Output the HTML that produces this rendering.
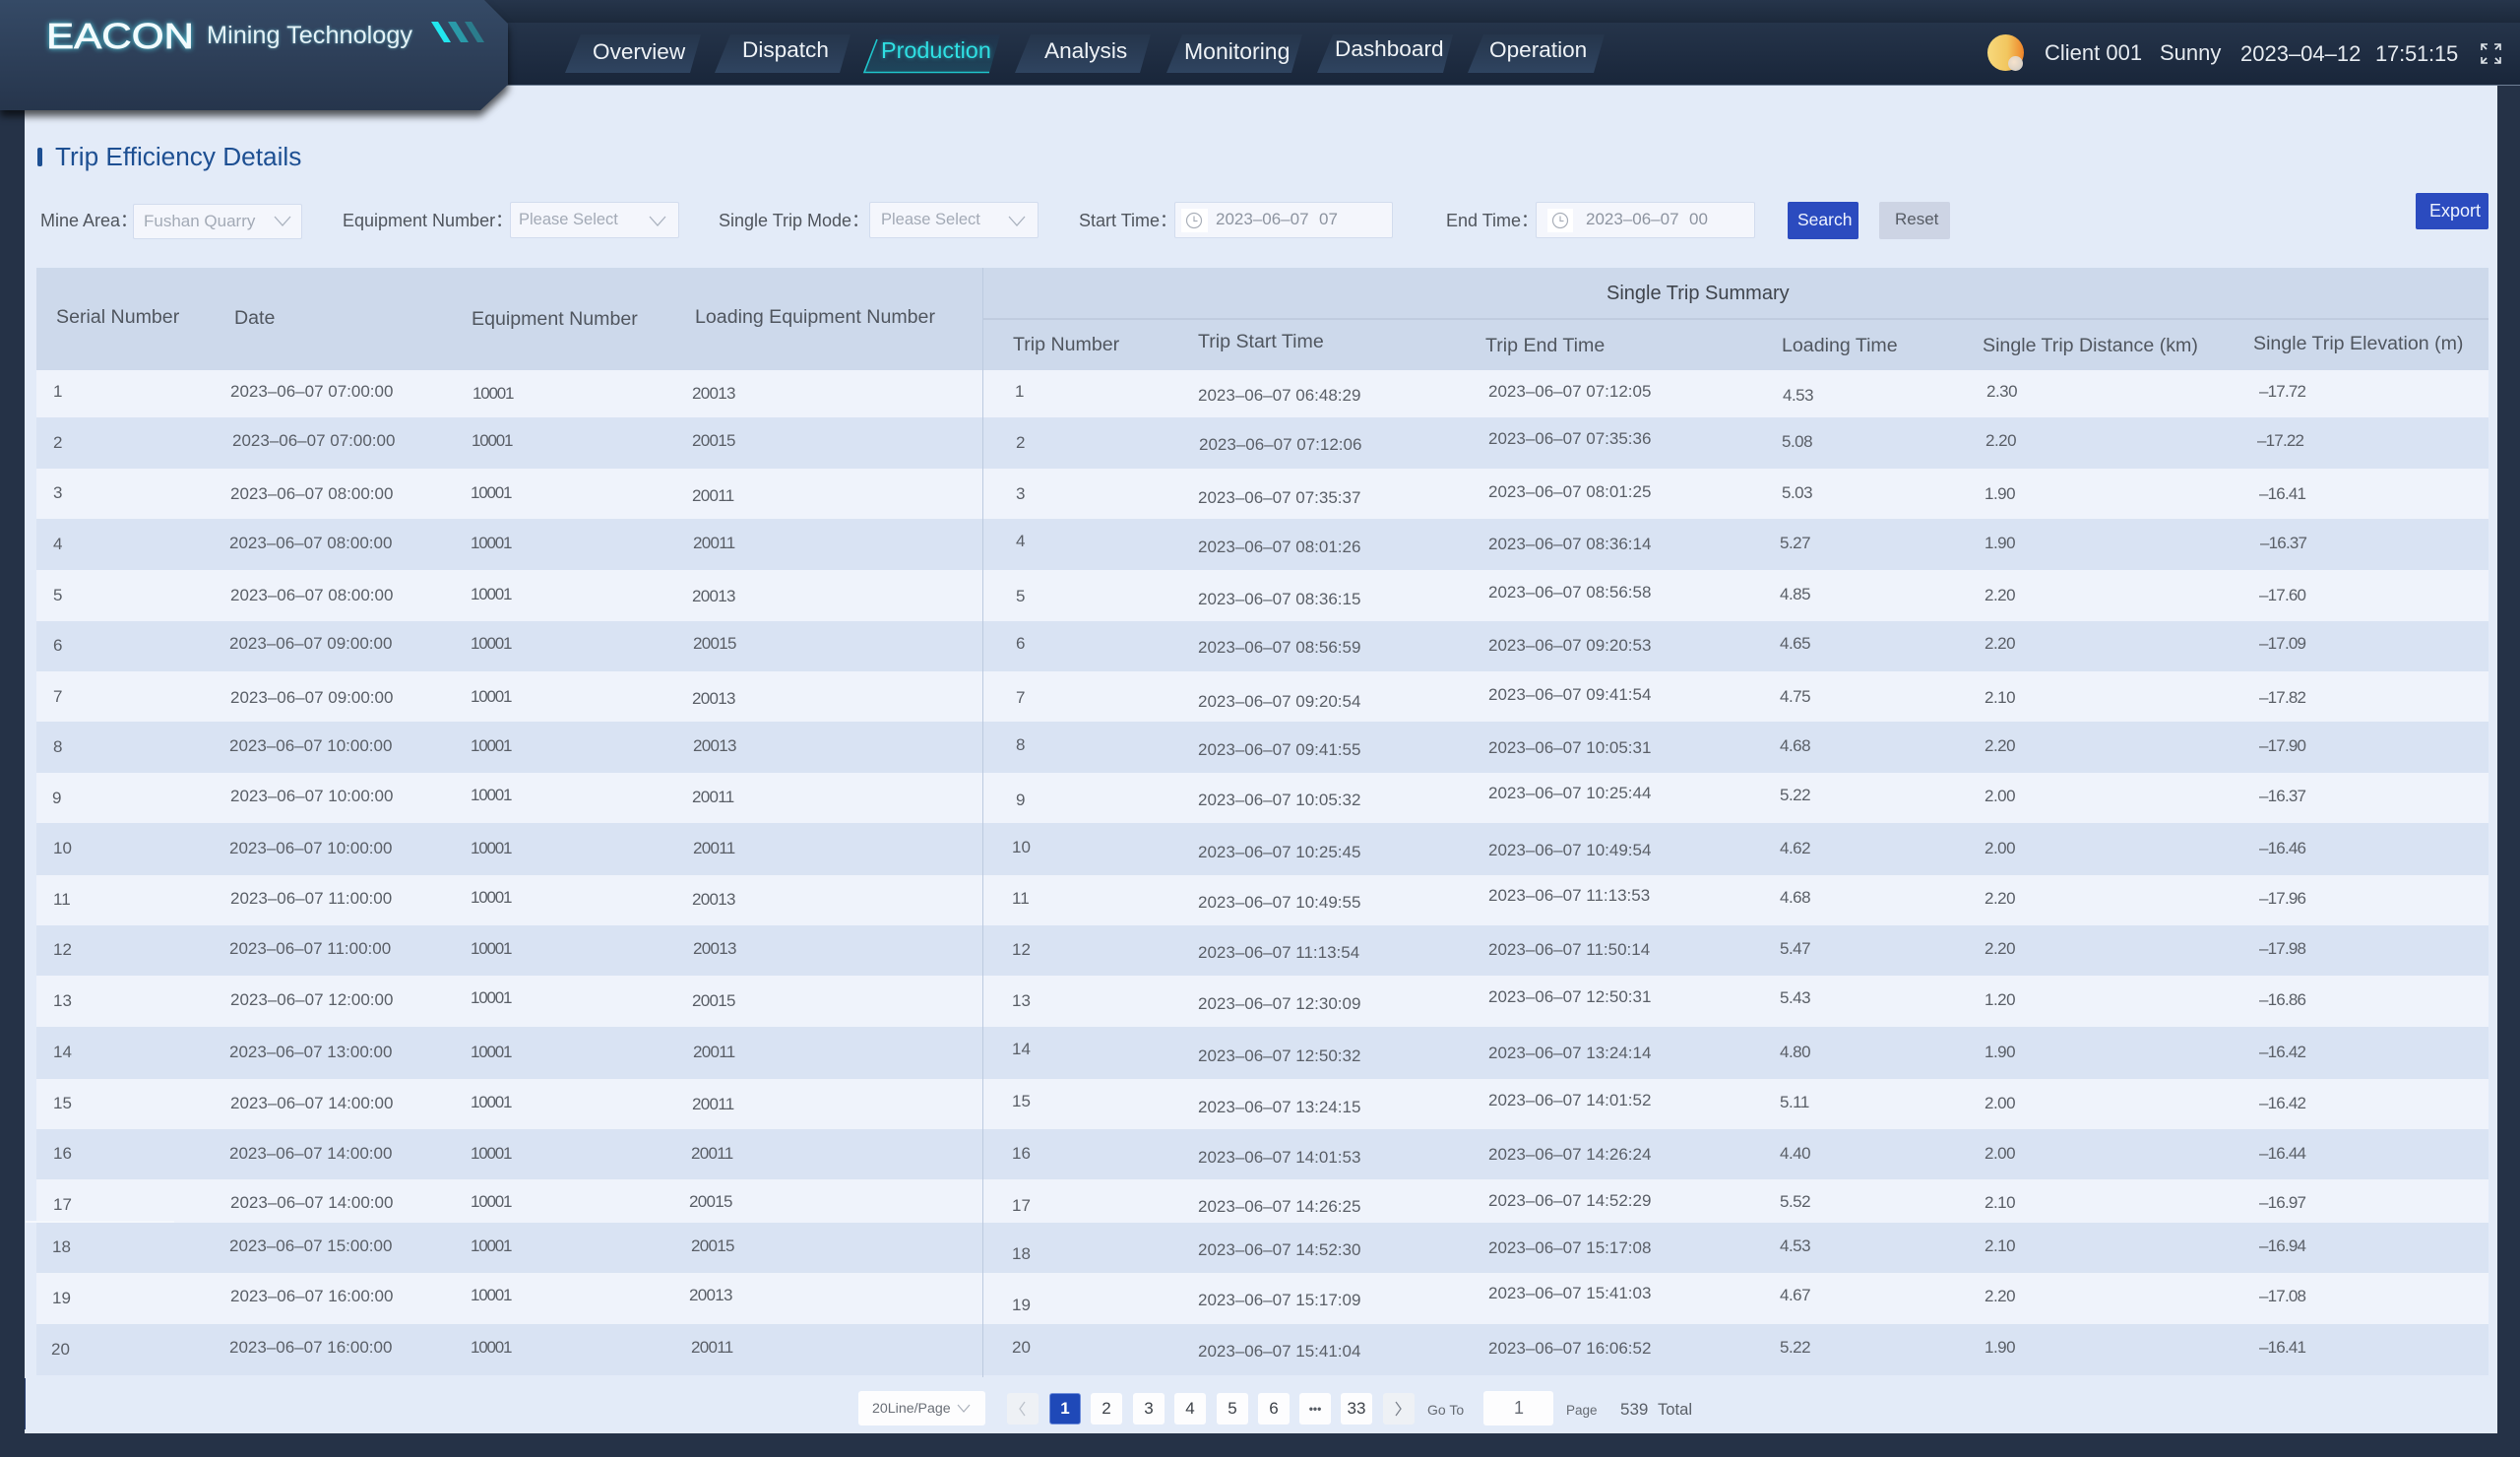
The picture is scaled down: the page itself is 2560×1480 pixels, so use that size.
<!DOCTYPE html>
<html lang="en"><head><meta charset="utf-8"><title>Trip Efficiency Details</title>
<style>
html,body{margin:0;padding:0}
body{width:2560px;height:1480px;overflow:hidden;position:relative;background:#253247;font-family:"Liberation Sans",sans-serif}
#c{position:absolute;left:25px;top:80px;width:2512px;height:1376px;background:#e3ebf8}
.b{position:absolute}
i{position:absolute;font-style:normal;white-space:nowrap;line-height:20px;font-size:17px;color:#5a5f67;filter:blur(.35px)}
.n{font-size:22.6px;color:#eef2f6}
.h{font-size:22px;color:#e6ebf0}
.l{font-size:18px;color:#50555d}
.p{font-size:16.5px;color:#a3aab6}
.s{position:absolute;background:#f4f6fc;border:1.5px solid #d2dcee;box-sizing:border-box;border-radius:2px}
.t{font-size:19.6px;color:#50565f}
.k{position:absolute;top:1415px;height:32px;width:32px;background:#fdfdfe;border-radius:3px}
.g{font-size:17px;color:#3d4249;width:32px;text-align:center}
.e{letter-spacing:-1.2px}.f{letter-spacing:-.7px}.v{letter-spacing:-.8px}.w{letter-spacing:-.5px}
</style></head><body>
<div id="c"></div>
<!-- header -->
<div class="b" style="left:0;top:0;width:2560px;height:23px;background:linear-gradient(#26354b,#1c293b)"></div>
<div class="b" style="left:0;top:23px;width:2560px;height:63px;background:linear-gradient(#25344a,#19263a);border-bottom:1px solid #6f7f95;box-sizing:content-box"></div>
<svg class="b" style="left:0;top:0" width="2560" height="90">
<defs><linearGradient id="tb" x1="0" y1="0" x2="0" y2="1"><stop offset="0" stop-color="#25354b"/><stop offset="1" stop-color="#2f4460"/></linearGradient>
<linearGradient id="tp" x1="0" y1="0" x2="0" y2="1"><stop offset="0" stop-color="#21324a"/><stop offset="1" stop-color="#1e465c"/></linearGradient></defs>
<polygon points="590,35 712,35 701,74 574,74" fill="url(#tb)"/>
<polygon points="742,35 864,35 853,74 726,74" fill="url(#tb)"/>
<polygon points="894,35 1016,35 1005,74 878,74" fill="url(#tp)"/>
<polygon points="1047,35 1169,35 1158,74 1031,74" fill="url(#tb)"/>
<polygon points="1201,35 1323,35 1312,74 1185,74" fill="url(#tb)"/>
<polygon points="1354,35 1476,35 1466,74 1338,74" fill="url(#tb)"/>
<polygon points="1507,35 1630,35 1619,74 1491,74" fill="url(#tb)"/>
<path d="M891 40L878 73.5H1005" fill="none" stroke="#1fc4cb" stroke-width="1.6"/>
</svg>
<i class="n" style="left:602px;top:43px">Overview</i>
<i class="n" style="left:754px;top:41px">Dispatch</i>
<i class="n" style="left:895px;top:41px;font-size:23.4px;color:#2fe0e3;text-shadow:0 0 4px rgba(47,224,227,.5)">Production</i>
<i class="n" style="left:1061px;top:42px">Analysis</i>
<i class="n" style="left:1203px;top:42px;font-size:23px">Monitoring</i>
<i class="n" style="left:1356px;top:40px">Dashboard</i>
<i class="n" style="left:1513px;top:41px">Operation</i>
<!-- logo -->
<div class="b" style="left:0;top:0;width:530px;height:125px;filter:drop-shadow(0 6px 4px rgba(0,0,0,.65))">
<div class="b" style="left:0;top:0;width:516px;height:112px;background:linear-gradient(#354a66,#26354c);clip-path:polygon(0 0,492px 0,516px 24px,516px 86px,488px 112px,0 112px)"></div>
</div>
<svg class="b" style="left:0;top:0" width="530" height="112">
<text x="47" y="49" font-family="Liberation Sans" font-size="36" fill="#f2fbfd" stroke="#f2fbfd" stroke-width=".7" textLength="150" lengthAdjust="spacingAndGlyphs" style="filter:drop-shadow(0 0 3px #55d8e8)">EACON</text>
<polygon points="438,22 445,22 458,43 451,43" fill="#22e6ee"/>
<polygon points="455,22 463,22 476,43 468,43" fill="#2a9aa8"/>
<polygon points="472,22 479,22 492,43 485,43" fill="#2b7c8c"/>
</svg>
<i style="left:210px;top:26px;font-size:25.3px;color:#e4f3f7;text-shadow:0 0 3px rgba(120,220,235,.6)">Mining Technology</i>
<!-- header right -->
<div class="b" style="left:2019px;top:35px;width:37px;height:37px;border-radius:50%;background:linear-gradient(90deg,#f7d97c,#f2c65f 55%,#ef8429)"></div>
<div class="b" style="left:2040px;top:57px;width:15px;height:15px;border-radius:50%;background:radial-gradient(circle at 40% 40%,#f6e2cc,#cbc8c2)"></div>
<i class="h" style="left:2077px;top:44px">Client 001</i>
<i class="h" style="left:2194px;top:44px">Sunny</i>
<i class="h" style="left:2276px;top:45px">2023–04–12</i>
<i class="h" style="left:2413px;top:45px;letter-spacing:-.2px">17:51:15</i>
<svg class="b" style="left:2520px;top:44px" width="21" height="21" fill="none" stroke="#dfe5ea" stroke-width="1.6"><path d="M1 7V1H7M1 1L6 6M14 1H20V7M20 1L15 6M1 14V20H7M1 20L6 15M14 20H20V14M20 20L15 15"/></svg>
<!-- sidebar edge -->
<div class="b" style="left:25px;top:1400px;width:1px;height:52px;background:#2a3f70"></div>
<!-- title -->
<div class="b" style="left:38px;top:150px;width:4.5px;height:19px;background:#1d4f92;border-radius:2px"></div>
<i style="left:56px;top:149px;font-size:26.2px;color:#1d4f92">Trip Efficiency Details</i>
<!-- filters -->
<i class="l" style="left:41px;top:214px">Mine Area：</i>
<div class="s" style="left:135px;top:207px;width:172px;height:36px"></div>
<i class="p" style="left:146px;top:215px;font-size:17px">Fushan Quarry</i>
<i class="l" style="left:348px;top:214px">Equipment Number：</i>
<div class="s" style="left:518px;top:205px;width:172px;height:37px"></div>
<i class="p" style="left:527px;top:213px">Please Select</i>
<i class="l" style="left:730px;top:214px">Single Trip Mode：</i>
<div class="s" style="left:883px;top:205px;width:172px;height:37px"></div>
<i class="p" style="left:895px;top:213px">Please Select</i>
<svg class="b" style="left:0;top:0" width="1100" height="240" fill="none" stroke="#a9b1be" stroke-width="1.3"><path d="M279 220L287 229L295 220M660 220L668 229L676 220M1025 220L1033 229L1041 220"/></svg>
<i class="l" style="left:1096px;top:214px">Start Time：</i>
<div class="s" style="left:1193px;top:205px;width:222px;height:37px"></div>
<div class="b" style="left:1200px;top:212px;width:27px;height:24px;background:#fff"></div>
<svg class="b" style="left:1204px;top:215px" width="18" height="18" fill="none" stroke="#a9afb9" stroke-width="1.2"><circle cx="9" cy="9" r="7.5"/><path d="M9 4.5V9.5H12.5"/></svg>
<i class="p" style="left:1235px;top:213px;font-size:17px;color:#8d94a0">2023–06–07</i>
<i class="p" style="left:1340px;top:213px;font-size:17px;color:#8d94a0">07</i>
<i class="l" style="left:1469px;top:214px">End Time：</i>
<div class="s" style="left:1560px;top:205px;width:223px;height:37px"></div>
<div class="b" style="left:1572px;top:212px;width:26px;height:24px;background:#fff"></div>
<svg class="b" style="left:1576px;top:215px" width="18" height="18" fill="none" stroke="#a9afb9" stroke-width="1.2"><circle cx="9" cy="9" r="7.5"/><path d="M9 4.5V9.5H12.5"/></svg>
<i class="p" style="left:1611px;top:213px;font-size:17px;color:#8d94a0">2023–06–07</i>
<i class="p" style="left:1716px;top:213px;font-size:17px;color:#8d94a0">00</i>
<div class="b" style="left:1816px;top:205px;width:72px;height:38px;background:#2b4bbf;border-radius:2px"></div>
<i style="left:1826px;top:213px;font-size:17.5px;color:#eef3ff">Search</i>
<div class="b" style="left:1909px;top:205px;width:72px;height:38px;background:#cdd4e4;border-radius:2px"></div>
<i style="left:1925px;top:213px;font-size:17px;color:#565b64">Reset</i>
<div class="b" style="left:2454px;top:196px;width:74px;height:37px;background:#2b4bbf;border-radius:2px"></div>
<i style="left:2468px;top:204px;font-size:18px;color:#eef3ff">Export</i>
<!-- table bg -->
<div class="b" style="left:37px;top:272px;width:2491px;height:104px;background:#cdd9eb"></div>
<div class="b" style="left:998px;top:323px;width:1530px;height:1.5px;background:#c0ccdf"></div>
<div class="b" style="left:37px;top:376px;width:2491px;height:48px;background:#eff3fb"></div>
<div class="b" style="left:37px;top:424px;width:2491px;height:52px;background:#d9e3f3"></div>
<div class="b" style="left:37px;top:476px;width:2491px;height:51px;background:#eff3fb"></div>
<div class="b" style="left:37px;top:527px;width:2491px;height:52px;background:#d9e3f3"></div>
<div class="b" style="left:37px;top:579px;width:2491px;height:52px;background:#eff3fb"></div>
<div class="b" style="left:37px;top:631px;width:2491px;height:51px;background:#d9e3f3"></div>
<div class="b" style="left:37px;top:682px;width:2491px;height:51px;background:#eff3fb"></div>
<div class="b" style="left:37px;top:733px;width:2491px;height:52px;background:#d9e3f3"></div>
<div class="b" style="left:37px;top:785px;width:2491px;height:51px;background:#eff3fb"></div>
<div class="b" style="left:37px;top:836px;width:2491px;height:53px;background:#d9e3f3"></div>
<div class="b" style="left:37px;top:889px;width:2491px;height:51px;background:#eff3fb"></div>
<div class="b" style="left:37px;top:940px;width:2491px;height:51px;background:#d9e3f3"></div>
<div class="b" style="left:37px;top:991px;width:2491px;height:52px;background:#eff3fb"></div>
<div class="b" style="left:37px;top:1043px;width:2491px;height:53px;background:#d9e3f3"></div>
<div class="b" style="left:37px;top:1096px;width:2491px;height:51px;background:#eff3fb"></div>
<div class="b" style="left:37px;top:1147px;width:2491px;height:51px;background:#d9e3f3"></div>
<div class="b" style="left:37px;top:1198px;width:2491px;height:44px;background:#eff3fb"></div>
<div class="b" style="left:26px;top:1240px;width:151px;height:1.5px;background:#f5f8fd"></div>
<div class="b" style="left:37px;top:1242px;width:2491px;height:51px;background:#d9e3f3"></div>
<div class="b" style="left:37px;top:1293px;width:2491px;height:52px;background:#eff3fb"></div>
<div class="b" style="left:37px;top:1345px;width:2491px;height:52px;background:#d9e3f3"></div>
<div class="b" style="left:997.5px;top:272px;width:1px;height:1127px;background:#bccadf"></div>
<!-- table head -->
<i class="t" style="left:57px;top:312px">Serial Number</i>
<i class="t" style="left:238px;top:313px">Date</i>
<i class="t" style="left:479px;top:314px">Equipment Number</i>
<i class="t" style="left:706px;top:312px">Loading Equipment Number</i>
<i class="t" style="left:1632px;top:288px;font-size:20px;color:#3f444c">Single Trip Summary</i>
<i class="t" style="left:1029px;top:340px">Trip Number</i>
<i class="t" style="left:1217px;top:337px">Trip Start Time</i>
<i class="t" style="left:1509px;top:341px">Trip End Time</i>
<i class="t" style="left:1810px;top:341px">Loading Time</i>
<i class="t" style="left:2014px;top:341px">Single Trip Distance (km)</i>
<i class="t" style="left:2289px;top:339px">Single Trip Elevation (m)</i>
<!-- row 1 -->
<i style="left:54px;top:388px">1</i><i style="left:234px;top:388px">2023–06–07 07:00:00</i><i class="e" style="left:480px;top:390px">10001</i><i class="f" style="left:703px;top:390px">20013</i><i style="left:1031px;top:388px">1</i><i style="left:1217px;top:392px">2023–06–07 06:48:29</i><i style="left:1512px;top:388px">2023–06–07 07:12:05</i><i class="w" style="left:1811px;top:392px">4.53</i><i class="w" style="left:2018px;top:388px">2.30</i><i class="v" style="left:2295px;top:388px">–17.72</i>
<!-- row 2 -->
<i style="left:54px;top:440px">2</i><i style="left:236px;top:438px">2023–06–07 07:00:00</i><i class="e" style="left:479px;top:438px">10001</i><i class="f" style="left:703px;top:438px">20015</i><i style="left:1032px;top:440px">2</i><i style="left:1218px;top:442px">2023–06–07 07:12:06</i><i style="left:1512px;top:436px">2023–06–07 07:35:36</i><i class="w" style="left:1810px;top:439px">5.08</i><i class="w" style="left:2017px;top:438px">2.20</i><i class="v" style="left:2293px;top:438px">–17.22</i>
<!-- row 3 -->
<i style="left:54px;top:491px">3</i><i style="left:234px;top:492px">2023–06–07 08:00:00</i><i class="e" style="left:478px;top:491px">10001</i><i class="f" style="left:703px;top:494px">20011</i><i style="left:1032px;top:492px">3</i><i style="left:1217px;top:496px">2023–06–07 07:35:37</i><i style="left:1512px;top:490px">2023–06–07 08:01:25</i><i class="w" style="left:1810px;top:491px">5.03</i><i class="w" style="left:2016px;top:492px">1.90</i><i class="v" style="left:2295px;top:492px">–16.41</i>
<!-- row 4 -->
<i style="left:54px;top:543px">4</i><i style="left:233px;top:542px">2023–06–07 08:00:00</i><i class="e" style="left:478px;top:542px">10001</i><i class="f" style="left:704px;top:542px">20011</i><i style="left:1032px;top:540px">4</i><i style="left:1217px;top:546px">2023–06–07 08:01:26</i><i style="left:1512px;top:543px">2023–06–07 08:36:14</i><i class="w" style="left:1808px;top:542px">5.27</i><i class="w" style="left:2016px;top:542px">1.90</i><i class="v" style="left:2296px;top:542px">–16.37</i>
<!-- row 5 -->
<i style="left:54px;top:595px">5</i><i style="left:234px;top:595px">2023–06–07 08:00:00</i><i class="e" style="left:478px;top:594px">10001</i><i class="f" style="left:703px;top:596px">20013</i><i style="left:1032px;top:596px">5</i><i style="left:1217px;top:599px">2023–06–07 08:36:15</i><i style="left:1512px;top:592px">2023–06–07 08:56:58</i><i class="w" style="left:1808px;top:594px">4.85</i><i class="w" style="left:2016px;top:595px">2.20</i><i class="v" style="left:2295px;top:595px">–17.60</i>
<!-- row 6 -->
<i style="left:54px;top:646px">6</i><i style="left:233px;top:644px">2023–06–07 09:00:00</i><i class="e" style="left:478px;top:644px">10001</i><i class="f" style="left:704px;top:644px">20015</i><i style="left:1032px;top:644px">6</i><i style="left:1217px;top:648px">2023–06–07 08:56:59</i><i style="left:1512px;top:646px">2023–06–07 09:20:53</i><i class="w" style="left:1808px;top:644px">4.65</i><i class="w" style="left:2016px;top:644px">2.20</i><i class="v" style="left:2295px;top:644px">–17.09</i>
<!-- row 7 -->
<i style="left:54px;top:698px">7</i><i style="left:234px;top:699px">2023–06–07 09:00:00</i><i class="e" style="left:478px;top:698px">10001</i><i class="f" style="left:703px;top:700px">20013</i><i style="left:1032px;top:699px">7</i><i style="left:1217px;top:703px">2023–06–07 09:20:54</i><i style="left:1512px;top:696px">2023–06–07 09:41:54</i><i class="w" style="left:1808px;top:698px">4.75</i><i class="w" style="left:2016px;top:699px">2.10</i><i class="v" style="left:2295px;top:699px">–17.82</i>
<!-- row 8 -->
<i style="left:54px;top:749px">8</i><i style="left:233px;top:748px">2023–06–07 10:00:00</i><i class="e" style="left:478px;top:748px">10001</i><i class="f" style="left:704px;top:748px">20013</i><i style="left:1032px;top:747px">8</i><i style="left:1217px;top:752px">2023–06–07 09:41:55</i><i style="left:1512px;top:750px">2023–06–07 10:05:31</i><i class="w" style="left:1808px;top:748px">4.68</i><i class="w" style="left:2016px;top:748px">2.20</i><i class="v" style="left:2295px;top:748px">–17.90</i>
<!-- row 9 -->
<i style="left:53px;top:801px">9</i><i style="left:234px;top:799px">2023–06–07 10:00:00</i><i class="e" style="left:478px;top:798px">10001</i><i class="f" style="left:703px;top:800px">20011</i><i style="left:1032px;top:803px">9</i><i style="left:1217px;top:803px">2023–06–07 10:05:32</i><i style="left:1512px;top:796px">2023–06–07 10:25:44</i><i class="w" style="left:1808px;top:798px">5.22</i><i class="w" style="left:2016px;top:799px">2.00</i><i class="v" style="left:2295px;top:799px">–16.37</i>
<!-- row 10 -->
<i style="left:54px;top:852px">10</i><i style="left:233px;top:852px">2023–06–07 10:00:00</i><i class="e" style="left:478px;top:852px">10001</i><i class="f" style="left:704px;top:852px">20011</i><i style="left:1028px;top:851px">10</i><i style="left:1217px;top:856px">2023–06–07 10:25:45</i><i style="left:1512px;top:854px">2023–06–07 10:49:54</i><i class="w" style="left:1808px;top:852px">4.62</i><i class="w" style="left:2016px;top:852px">2.00</i><i class="v" style="left:2295px;top:852px">–16.46</i>
<!-- row 11 -->
<i style="left:54px;top:904px">11</i><i style="left:234px;top:903px">2023–06–07 11:00:00</i><i class="e" style="left:478px;top:902px">10001</i><i class="f" style="left:703px;top:904px">20013</i><i style="left:1028px;top:903px">11</i><i style="left:1217px;top:907px">2023–06–07 10:49:55</i><i style="left:1512px;top:900px">2023–06–07 11:13:53</i><i class="w" style="left:1808px;top:902px">4.68</i><i class="w" style="left:2016px;top:903px">2.20</i><i class="v" style="left:2295px;top:903px">–17.96</i>
<!-- row 12 -->
<i style="left:54px;top:955px">12</i><i style="left:233px;top:954px">2023–06–07 11:00:00</i><i class="e" style="left:478px;top:954px">10001</i><i class="f" style="left:704px;top:954px">20013</i><i style="left:1028px;top:955px">12</i><i style="left:1217px;top:958px">2023–06–07 11:13:54</i><i style="left:1512px;top:955px">2023–06–07 11:50:14</i><i class="w" style="left:1808px;top:954px">5.47</i><i class="w" style="left:2016px;top:954px">2.20</i><i class="v" style="left:2295px;top:954px">–17.98</i>
<!-- row 13 -->
<i style="left:54px;top:1007px">13</i><i style="left:234px;top:1006px">2023–06–07 12:00:00</i><i class="e" style="left:478px;top:1004px">10001</i><i class="f" style="left:703px;top:1007px">20015</i><i style="left:1028px;top:1007px">13</i><i style="left:1217px;top:1010px">2023–06–07 12:30:09</i><i style="left:1512px;top:1003px">2023–06–07 12:50:31</i><i class="w" style="left:1808px;top:1004px">5.43</i><i class="w" style="left:2016px;top:1006px">1.20</i><i class="v" style="left:2295px;top:1006px">–16.86</i>
<!-- row 14 -->
<i style="left:54px;top:1059px">14</i><i style="left:233px;top:1059px">2023–06–07 13:00:00</i><i class="e" style="left:478px;top:1059px">10001</i><i class="f" style="left:704px;top:1059px">20011</i><i style="left:1028px;top:1056px">14</i><i style="left:1217px;top:1063px">2023–06–07 12:50:32</i><i style="left:1512px;top:1060px">2023–06–07 13:24:14</i><i class="w" style="left:1808px;top:1059px">4.80</i><i class="w" style="left:2016px;top:1059px">1.90</i><i class="v" style="left:2295px;top:1059px">–16.42</i>
<!-- row 15 -->
<i style="left:54px;top:1111px">15</i><i style="left:234px;top:1111px">2023–06–07 14:00:00</i><i class="e" style="left:478px;top:1110px">10001</i><i class="f" style="left:703px;top:1112px">20011</i><i style="left:1028px;top:1109px">15</i><i style="left:1217px;top:1115px">2023–06–07 13:24:15</i><i style="left:1512px;top:1108px">2023–06–07 14:01:52</i><i class="w" style="left:1808px;top:1110px">5.11</i><i class="w" style="left:2016px;top:1111px">2.00</i><i class="v" style="left:2295px;top:1111px">–16.42</i>
<!-- row 16 -->
<i style="left:54px;top:1162px">16</i><i style="left:233px;top:1162px">2023–06–07 14:00:00</i><i class="e" style="left:478px;top:1162px">10001</i><i class="f" style="left:702px;top:1162px">20011</i><i style="left:1028px;top:1162px">16</i><i style="left:1217px;top:1166px">2023–06–07 14:01:53</i><i style="left:1512px;top:1163px">2023–06–07 14:26:24</i><i class="w" style="left:1808px;top:1162px">4.40</i><i class="w" style="left:2016px;top:1162px">2.00</i><i class="v" style="left:2295px;top:1162px">–16.44</i>
<!-- row 17 -->
<i style="left:54px;top:1214px">17</i><i style="left:234px;top:1212px">2023–06–07 14:00:00</i><i class="e" style="left:478px;top:1211px">10001</i><i class="f" style="left:700px;top:1211px">20015</i><i style="left:1028px;top:1215px">17</i><i style="left:1217px;top:1216px">2023–06–07 14:26:25</i><i style="left:1512px;top:1210px">2023–06–07 14:52:29</i><i class="w" style="left:1808px;top:1211px">5.52</i><i class="w" style="left:2016px;top:1212px">2.10</i><i class="v" style="left:2295px;top:1212px">–16.97</i>
<!-- row 18 -->
<i style="left:53px;top:1257px">18</i><i style="left:233px;top:1256px">2023–06–07 15:00:00</i><i class="e" style="left:478px;top:1256px">10001</i><i class="f" style="left:702px;top:1256px">20015</i><i style="left:1028px;top:1264px">18</i><i style="left:1217px;top:1260px">2023–06–07 14:52:30</i><i style="left:1512px;top:1258px">2023–06–07 15:17:08</i><i class="w" style="left:1808px;top:1256px">4.53</i><i class="w" style="left:2016px;top:1256px">2.10</i><i class="v" style="left:2295px;top:1256px">–16.94</i>
<!-- row 19 -->
<i style="left:53px;top:1309px">19</i><i style="left:234px;top:1307px">2023–06–07 16:00:00</i><i class="e" style="left:478px;top:1306px">10001</i><i class="f" style="left:700px;top:1306px">20013</i><i style="left:1028px;top:1316px">19</i><i style="left:1217px;top:1311px">2023–06–07 15:17:09</i><i style="left:1512px;top:1304px">2023–06–07 15:41:03</i><i class="w" style="left:1808px;top:1306px">4.67</i><i class="w" style="left:2016px;top:1307px">2.20</i><i class="v" style="left:2295px;top:1307px">–17.08</i>
<!-- row 20 -->
<i style="left:52px;top:1361px">20</i><i style="left:233px;top:1359px">2023–06–07 16:00:00</i><i class="e" style="left:478px;top:1359px">10001</i><i class="f" style="left:702px;top:1359px">20011</i><i style="left:1028px;top:1359px">20</i><i style="left:1217px;top:1363px">2023–06–07 15:41:04</i><i style="left:1512px;top:1360px">2023–06–07 16:06:52</i><i class="w" style="left:1808px;top:1359px">5.22</i><i class="w" style="left:2016px;top:1359px">1.90</i><i class="v" style="left:2295px;top:1359px">–16.41</i>
<!-- pagination -->
<div class="b" style="left:872px;top:1413px;width:129px;height:35px;background:#fdfdfe;border-radius:3px"></div>
<i style="left:886px;top:1421px;font-size:14.2px;color:#6a6f77">20Line/Page</i>
<svg class="b" style="left:972px;top:1426px" width="14" height="10" fill="none" stroke="#aab0ba" stroke-width="1.2"><path d="M1 1L7 8L13 1"/></svg>
<div class="k" style="left:1023px;background:#eef1f5"></div>
<svg class="b" style="left:1034px;top:1423px" width="10" height="16" fill="none" stroke="#bcc2cb" stroke-width="1.3"><path d="M7 1L2 8L7 15"/></svg>
<div class="k" style="left:1066px;background:#1f49b8;border:1px solid #6f8edb;box-sizing:border-box"></div><i class="g" style="left:1066px;top:1421px;color:#fff;font-weight:bold">1</i>
<div class="k" style="left:1108px"></div><i class="g" style="left:1108px;top:1421px">2</i>
<div class="k" style="left:1151px"></div><i class="g" style="left:1151px;top:1421px">3</i>
<div class="k" style="left:1193px"></div><i class="g" style="left:1193px;top:1421px">4</i>
<div class="k" style="left:1236px"></div><i class="g" style="left:1236px;top:1421px">5</i>
<div class="k" style="left:1278px"></div><i class="g" style="left:1278px;top:1421px">6</i>
<div class="k" style="left:1320px"></div><i class="g" style="left:1320px;top:1421px;font-weight:bold;font-size:12px;color:#555a62">•••</i>
<div class="k" style="left:1362px"></div><i class="g" style="left:1362px;top:1421px">33</i>
<div class="k" style="left:1405px;background:#eef1f5"></div>
<svg class="b" style="left:1416px;top:1423px" width="10" height="16" fill="none" stroke="#7e848e" stroke-width="1.3"><path d="M2 1L7 8L2 15"/></svg>
<i style="left:1450px;top:1422px;font-size:14px;color:#666b73">Go To</i>
<div class="b" style="left:1507px;top:1413px;width:71px;height:35px;background:#fdfdfe;border-radius:3px"></div>
<i style="left:1538px;top:1420px;font-size:18px;color:#666b73">1</i>
<i style="left:1591px;top:1423px;font-size:13.5px;color:#666b73">Page</i>
<i style="left:1646px;top:1422px;color:#5a5f67">539</i>
<i style="left:1684px;top:1422px;font-size:16.6px;color:#5a5f67">Total</i>
</body></html>
